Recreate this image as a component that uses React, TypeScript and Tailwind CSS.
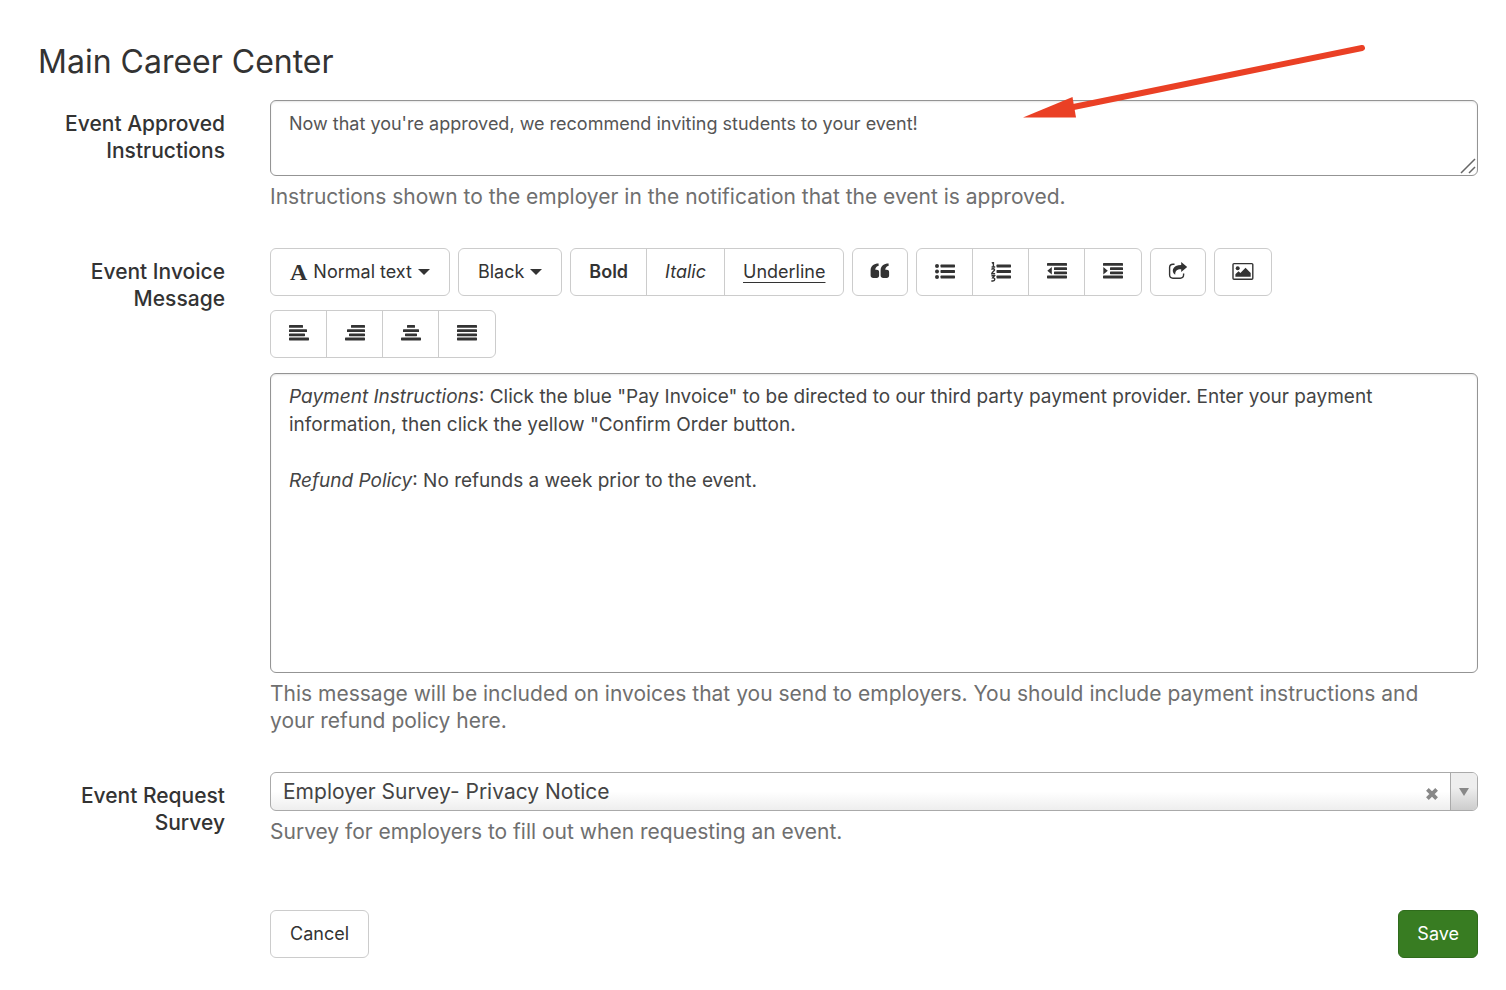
import type { ReactNode } from "react";
import clsx from "clsx";

type IconProps = {
  children: ReactNode;
};

function Icon({ children }: IconProps) {
  return (
    <svg viewBox="0 0 20 20" className="size-5 shrink-0" fill="currentColor" aria-hidden="true">
      {children}
    </svg>
  );
}

type BarsProps = {
  bars: [x: number, y: number, width: number][];
};

function Bars({ bars }: BarsProps) {
  return (
    <>
      {bars.map(([x, y, width]) => (
        <rect key={y} x={x} y={y} width={width} height="2.8" rx="0.6" />
      ))}
    </>
  );
}

function QuoteIcon() {
  const mark =
    "M8.6 2v2.4C6.5 4.600 5.400 6 5.300 8.200h1.400c1.400 0 2.400.9 2.400 2.300v3.600c0 1.400-1 2.300-2.400 2.300H3.200C1.700 16.400.6 15.500.6 14.100V8.900C.6 4.500 4 2 8.600 2z";
  return (
    <Icon>
      <path d={mark} transform="translate(0 -0.500)" />
      <path d={mark} transform="translate(10 -0.500)" />
    </Icon>
  );
}

function BulletListIcon() {
  return (
    <Icon>
      <circle cx="2" cy="4" r="2" />
      <circle cx="2" cy="9.500" r="2" />
      <circle cx="2" cy="15" r="2" />
      <Bars bars={[[5.5, 2.6, 14.5], [5.5, 8.1, 14.5], [5.5, 13.6, 14.5]]} />
    </Icon>
  );
}

function NumberListIcon() {
  return (
    <Icon>
      <g fill="none" stroke="currentColor" strokeWidth="1.4">
        <path d="M.8 1.200 2.400.300V5M.6 5h3.600" />
        <path d="M.6 7.600c.4-1.300 3-1.200 2.900.3C3.400 9.200 1.200 10 .8 11.700h3.300" />
        <path d="M.5 13.800h2.900L1.900 15.700c2.600-.2 2.400 3.300 0 3.300-.7 0-1.100-.1-1.500-.4" />
      </g>
      <Bars bars={[[5.5, 2.6, 14.5], [5.5, 8.1, 14.5], [5.5, 13.6, 14.5]]} />
    </Icon>
  );
}

type IndentIconProps = {
  outdent?: boolean;
};

function IndentIcon({ outdent = false }: IndentIconProps) {
  return (
    <Icon>
      <Bars bars={[[0, 1, 20], [7, 5.2, 13], [7, 9.4, 13], [0, 13.6, 20]]} />
      <path d={outdent ? "M.3 8.700 4.800 4.900v7.600z" : "M4.800 8.700.3 4.900v7.600z"} />
    </Icon>
  );
}

function ShareIcon() {
  return (
    <Icon>
      <path
        d="M6.500 2.200H5C3 2.200 1.600 3.600 1.600 5.600v7.200c0 2 1.400 3.400 3.400 3.400h7.200c2 0 3.400-1.400 3.400-3.400v-1.400"
        fill="none"
        stroke="currentColor"
        strokeWidth="1.4"
      />
      <path d="M13.200 0 19.200 4.900l-6 5.200V7.300C9 7.200 7.200 8.800 7.200 12.700 2.600 9.500 4.600 3 13.200 2.900z" />
    </Icon>
  );
}

function PictureIcon() {
  return (
    <svg viewBox="0 0 22 20" className="h-5 w-[22px]" fill="currentColor" aria-hidden="true">
      <rect x="1" y="1.600" width="19.800" height="15.600" rx="1" fill="none" stroke="currentColor" strokeWidth="1.400" />
      <circle cx="5.700" cy="6.200" r="2" />
      <path d="M3.400 14.800v-2.600l3.100-3 1.900 1.800 5.100-5.300 5.200 5.300v3.800z" />
    </svg>
  );
}

function AlignIcon({ bars }: BarsProps) {
  return (
    <Icon>
      <Bars bars={bars} />
    </Icon>
  );
}

function Caret() {
  return (
    <svg viewBox="0 0 12 6" className="h-[6px] w-3" fill="currentColor" aria-hidden="true">
      <path d="M0 0h12L6 6z" />
    </svg>
  );
}

type ToolButtonProps = {
  label?: string;
  className?: string;
  children: ReactNode;
};

function ToolButton({ label, className, children }: ToolButtonProps) {
  return (
    <button
      type="button"
      aria-label={label}
      title={label}
      className={clsx(
        "flex items-center justify-center text-lg text-[#333] hover:bg-gray-100",
        className,
      )}
    >
      {children}
    </button>
  );
}

function ToolGroup({ children }: { children: ReactNode }) {
  return (
    <div className="flex h-12 divide-x divide-[#ccc] overflow-hidden rounded-md border border-[#ccc] bg-white">
      {children}
    </div>
  );
}

function Toolbar() {
  return (
    <div role="toolbar" aria-label="Formatting" className="flex flex-wrap gap-x-2 gap-y-[14px]">
      <ToolGroup>
        <ToolButton className="gap-[6px] px-[19px]">
          <span className="font-['Liberation_Serif'] text-2xl font-bold">A</span>
          Normal text
          <Caret />
        </ToolButton>
      </ToolGroup>
      <ToolGroup>
        <ToolButton className="gap-[6px] px-[19px]">
          Black
          <Caret />
        </ToolButton>
      </ToolGroup>
      <ToolGroup>
        <ToolButton className="px-[18px] font-semibold">Bold</ToolButton>
        <ToolButton className="px-[18px] italic">Italic</ToolButton>
        <ToolButton className="px-[18px] underline underline-offset-4">Underline</ToolButton>
      </ToolGroup>
      <ToolGroup>
        <ToolButton label="Quote" className="w-[54px]">
          <QuoteIcon />
        </ToolButton>
      </ToolGroup>
      <ToolGroup>
        <ToolButton label="Bulleted list" className="w-14">
          <BulletListIcon />
        </ToolButton>
        <ToolButton label="Numbered list" className="w-14">
          <NumberListIcon />
        </ToolButton>
        <ToolButton label="Outdent" className="w-14">
          <IndentIcon outdent />
        </ToolButton>
        <ToolButton label="Indent" className="w-14">
          <IndentIcon />
        </ToolButton>
      </ToolGroup>
      <ToolGroup>
        <ToolButton label="Insert link" className="w-[54px]">
          <ShareIcon />
        </ToolButton>
      </ToolGroup>
      <ToolGroup>
        <ToolButton label="Insert image" className="w-14">
          <PictureIcon />
        </ToolButton>
      </ToolGroup>
      <div className="flex basis-full">
        <ToolGroup>
          <ToolButton label="Align left" className="w-14">
            <AlignIcon bars={[[0, 1, 14], [0, 5.2, 18], [0, 9.4, 16], [0, 13.6, 20]]} />
          </ToolButton>
          <ToolButton label="Align right" className="w-14">
            <AlignIcon bars={[[6, 1, 14], [2, 5.2, 18], [4, 9.4, 16], [0, 13.6, 20]]} />
          </ToolButton>
          <ToolButton label="Align center" className="w-14">
            <AlignIcon bars={[[6, 1, 8], [2, 5.2, 16], [4, 9.4, 12], [0, 13.6, 20]]} />
          </ToolButton>
          <ToolButton label="Justify" className="w-14">
            <AlignIcon bars={[[0, 1, 20], [0, 5.2, 20], [0, 9.4, 20], [0, 13.6, 20]]} />
          </ToolButton>
        </ToolGroup>
      </div>
    </div>
  );
}

type FieldProps = {
  id: string;
  label: string;
  help: string;
  children: ReactNode;
};

function Field({ id, label, help, children }: FieldProps) {
  return (
    <div className="grid grid-cols-[187px_1fr] gap-x-[45px]">
      <label
        id={`${id}-label`}
        htmlFor={id}
        className="pt-[10px] text-right text-[21px] leading-[27px] font-medium text-[#333]"
      >
        {label}
      </label>
      <div className="min-w-0">
        {children}
        <p className="mt-[7px] pr-5 text-[21px] leading-[27px] text-[#6f6f6f]">{help}</p>
      </div>
    </div>
  );
}

function PointerArrow() {
  return (
    <svg
      viewBox="0 0 342 76"
      className="pointer-events-none absolute top-[43px] right-[141px] h-[76px] w-[342px]"
      aria-hidden="true"
    >
      <path d="M48 64.500 339 5" stroke="#ea4025" strokeWidth="6" strokeLinecap="round" />
      <path d="M0 74.500 49.500 54 53 74.500z" fill="#ea4025" />
    </svg>
  );
}

export default function App() {
  return (
    <main className="relative min-h-screen bg-white pt-10 pr-7 pb-8 pl-[38px] font-[Inter,sans-serif]">
      <h1 className="text-[32px] leading-[44px] text-[#333]">Main Career Center</h1>
      <form className="mt-4 flex flex-col gap-[38px]">
        <Field
          id="approved-instructions"
          label="Event Approved Instructions"
          help="Instructions shown to the employer in the notification that the event is approved."
        >
          <div className="relative">
            <textarea
              id="approved-instructions"
              className="block h-[76px] w-full resize-none rounded-md border border-[#949494] px-[18px] py-[9px] text-lg leading-7 text-[#555] shadow-[inset_0_1px_2px_rgba(0,0,0,0.1)]"
              defaultValue="Now that you're approved, we recommend inviting students to your event!"
            />
            <svg
              viewBox="0 0 16 16"
              className="pointer-events-none absolute right-[2px] bottom-[2px] size-4"
              fill="none"
              stroke="#666"
              strokeWidth="1.500"
              aria-hidden="true"
            >
              <path d="M1 15 15 1M9 15l6-6" />
            </svg>
          </div>
        </Field>

        <Field
          id="invoice-message"
          label="Event Invoice Message"
          help="This message will be included on invoices that you send to employers. You should include payment instructions and your refund policy here."
        >
          <Toolbar />
          <div
            id="invoice-message"
            role="textbox"
            aria-multiline="true"
            aria-labelledby="invoice-message-label"
            contentEditable
            suppressContentEditableWarning
            className="mt-[15px] min-h-[300px] rounded-md border border-[#949494] px-[18px] py-[9px] text-[19px] leading-7 text-[#444] shadow-[inset_0_1px_2px_rgba(0,0,0,0.1)]"
          >
            <p>
              <i>Payment Instructions</i>: Click the blue "Pay Invoice" to be directed to our third party payment
              provider. Enter your payment information, then click the yellow "Confirm Order button.
            </p>
            <p className="mt-7">
              <i>Refund Policy</i>: No refunds a week prior to the event.
            </p>
          </div>
        </Field>

        <Field
          id="request-survey"
          label="Event Request Survey"
          help="Survey for employers to fill out when requesting an event."
        >
          <div className="flex h-[39px] overflow-hidden rounded-md border border-[#aaa] bg-linear-to-t from-[#eee] to-white to-50%">
            <select
              id="request-survey"
              className="min-w-0 flex-1 appearance-none bg-transparent px-3 text-[21px] text-[#444]"
            >
              <option>Employer Survey- Privacy Notice</option>
            </select>
            <button type="button" aria-label="Clear selection" className="flex items-center px-3 pt-1">
              <svg viewBox="0 0 12 12" className="size-3" stroke="#888" strokeWidth="3.800" aria-hidden="true">
                <path d="M1.400 1.400 10.600 10.600M10.600 1.400 1.400 10.600" />
              </svg>
            </button>
            <span className="flex w-[27px] items-center justify-center border-l border-[#aaa] bg-linear-to-t from-[#ccc] to-[#eee] to-60%">
              <svg viewBox="0 0 10 8" className="h-2 w-[10px]" fill="#888" aria-hidden="true">
                <path d="M0 0h10L5 8z" />
              </svg>
            </span>
          </div>
        </Field>

        <div className="mt-[27px] flex justify-between pl-[232px]">
          <button
            type="button"
            className="h-12 rounded-md border border-[#ccc] bg-white px-[19px] text-lg text-[#333] hover:bg-gray-100"
          >
            Cancel
          </button>
          <button
            type="submit"
            className="h-12 rounded-md border border-[#2f6b1c] bg-[#387c22] px-[18px] text-lg text-white hover:bg-[#2f6b1c]"
          >
            Save
          </button>
        </div>
      </form>
      <PointerArrow />
    </main>
  );
}
